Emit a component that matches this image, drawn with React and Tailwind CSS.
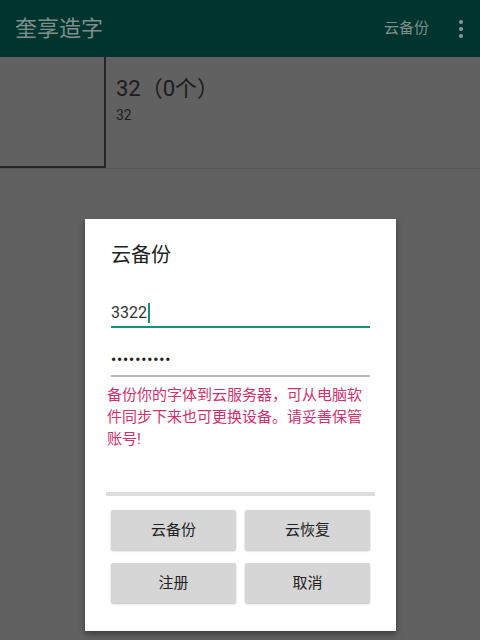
const FONT = { fontFamily: 'Roboto, "Noto Sans CJK SC", sans-serif' };

function Header() {
  return (
    <div className="h-[57px] bg-[#00352f] flex items-center pl-[15px] pr-[17px]">
      <div className="text-[22px] text-[#7f8f8c] flex-1 leading-none">奎享造字</div>
      <div className="text-[15px] text-[#7f8f8c] mr-[30px] leading-none">云备份</div>
      <div className="flex flex-col gap-[3px] items-center">
        <span className="w-[4px] h-[4px] rounded-full bg-[#8a9a98]" />
        <span className="w-[4px] h-[4px] rounded-full bg-[#8a9a98]" />
        <span className="w-[4px] h-[4px] rounded-full bg-[#8a9a98]" />
      </div>
    </div>
  );
}

function Button({ children }) {
  return (
    <button className="h-[40px] bg-[#d6d6d6] rounded-[2px] shadow-[0_1px_2px_rgba(0,0,0,0.25)] text-[15px] text-[#222]">
      {children}
    </button>
  );
}

export default function App() {
  return (
    <div className="w-[480px] h-[640px] bg-[#616161] relative overflow-hidden" style={FONT}>
      <Header />
      <div className="flex h-[112px] border-b border-[#555]">
        <div className="w-[106px] h-[111px] border-r-2 border-b-2 border-[#262626]" />
        <div className="pl-[10px] pt-[17px]">
          <div className="text-[22px] text-[#1c1c1c] leading-[30px]">32（0个）</div>
          <div className="text-[14px] text-[#1c1c1c] leading-[18px] mt-[2px]">32</div>
        </div>
      </div>

      <div className="absolute left-[85px] top-[219px] w-[311px] h-[412px] bg-white shadow-[0_3px_6px_rgba(0,0,0,0.4)]">
        <div className="px-[26px] pt-[22px]">
          <div className="text-[20px] text-[#222] leading-[28px]">云备份</div>
          <div className="mt-[31px] h-[28px] border-b-2 border-[#14907f] flex items-end pb-[3px]">
            <span className="text-[16px] text-[#333] leading-[20px]">3322</span>
            <span className="w-[2px] h-[20px] bg-[#14907f] ml-[1px]" />
          </div>
          <div className="mt-[13px] h-[36px] border-b-2 border-[#bbbbbb] flex items-end pb-[6px]">
            <span className="text-[14px] text-[#222] leading-[18px] tracking-[1px] font-bold">••••••••••</span>
          </div>
        </div>
        <div className="px-[22px] pt-[7px] text-[15px] leading-[22px] text-[#d0306e]">
          备份你的字体到云服务器，可从电脑软件同步下来也可更换设备。请妥善保管账号!
        </div>
        <div className="mx-[21px] mt-[42px] h-[4px] bg-[#dcdcdc]" />
        <div className="px-[26px] pt-[14px] grid grid-cols-2 gap-x-[9px] gap-y-[13px]">
          <Button>云备份</Button>
          <Button>云恢复</Button>
          <Button>注册</Button>
          <Button>取消</Button>
        </div>
      </div>
    </div>
  );
}
